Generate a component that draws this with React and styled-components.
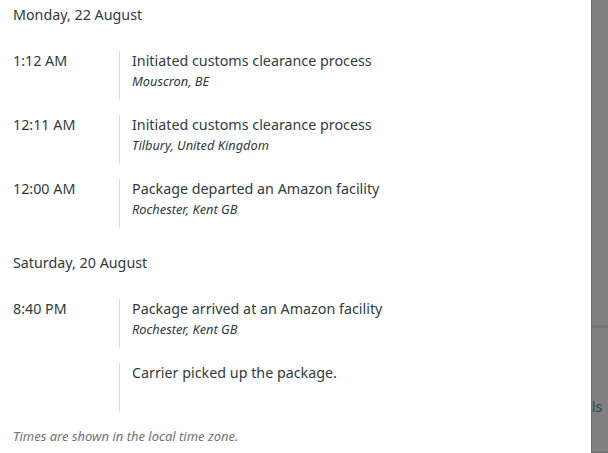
import React from "react";
import styled, { createGlobalStyle } from "styled-components";

const GlobalStyle = createGlobalStyle`
  html, body {
    margin: 0;
    padding: 0;
    background: #ffffff;
  }
  body {
    font-family: "Noto Sans", "Open Sans", Arial, sans-serif;
    color: #2f3b3c;
  }
`;

const Page = styled.div`
  display: flex;
  width: 608px;
  height: 453px;
  overflow: hidden;
`;

const Panel = styled.div`
  width: 591px;
  flex-shrink: 0;
  background: #ffffff;
  padding: 5px 0 0 13px;
  box-sizing: border-box;
`;

const Backdrop = styled.div`
  flex: 1;
  display: flex;
  flex-direction: column;
  background: #808080;
  border-left: 1px solid #6c6c6c;
`;

const BackdropBlock = styled.div`
  height: ${(p) => p.h}px;
  flex-shrink: 0;
  border-bottom: ${(p) => (p.line ? "3px solid #747474" : "none")};
  display: flex;
  align-items: ${(p) => (p.text ? "flex-end" : "stretch")};
  font-size: 14px;
  color: #1f4652;
  line-height: 20px;
`;

const DayTitle = styled.div`
  font-size: 14.3px;
  line-height: 20px;
  margin: ${(p) => (p.first ? "0" : "25px")} 0 26px;
`;

const Event = styled.div`
  display: flex;
  margin-bottom: 15px;
`;

const Time = styled.div`
  width: 106px;
  flex-shrink: 0;
  font-size: 14.3px;
  line-height: 20px;
`;

const Detail = styled.div`
  height: 49px;
  box-sizing: border-box;
  border-left: 1px solid #d5d9d9;
  padding-left: 12px;
`;

const Status = styled.div`
  font-size: 14.3px;
  line-height: 20px;
`;

const Place = styled.div`
  font-size: 12.8px;
  font-style: italic;
  line-height: 20px;
`;

const Note = styled.div`
  font-size: 13px;
  font-style: italic;
  line-height: 18px;
  color: #6f7373;
`;

const days = [
  {
    title: "Monday, 22 August",
    events: [
      { time: "1:12 AM", status: "Initiated customs clearance process", place: "Mouscron, BE" },
      { time: "12:11 AM", status: "Initiated customs clearance process", place: "Tilbury, United Kingdom" },
      { time: "12:00 AM", status: "Package departed an Amazon facility", place: "Rochester, Kent GB" },
    ],
  },
  {
    title: "Saturday, 20 August",
    events: [
      { time: "8:40 PM", status: "Package arrived at an Amazon facility", place: "Rochester, Kent GB" },
      { time: "", status: "Carrier picked up the package.", place: "" },
    ],
  },
];

export default function App() {
  return (
    <>
      <GlobalStyle />
      <Page>
        <Panel>
          {days.map((day, i) => (
            <div key={day.title}>
              <DayTitle first={i === 0}>{day.title}</DayTitle>
              {day.events.map((ev, j) => (
                <Event key={j}>
                  <Time>{ev.time}</Time>
                  <Detail>
                    <Status>{ev.status}</Status>
                    {ev.place && <Place>{ev.place}</Place>}
                  </Detail>
                </Event>
              ))}
            </div>
          ))}
          <Note>Times are shown in the local time zone.</Note>
        </Panel>
        <Backdrop>
          <BackdropBlock h={325} line />
          <BackdropBlock h={89} text>
            ls
          </BackdropBlock>
          <BackdropBlock h={34} line />
        </Backdrop>
      </Page>
    </>
  );
}
